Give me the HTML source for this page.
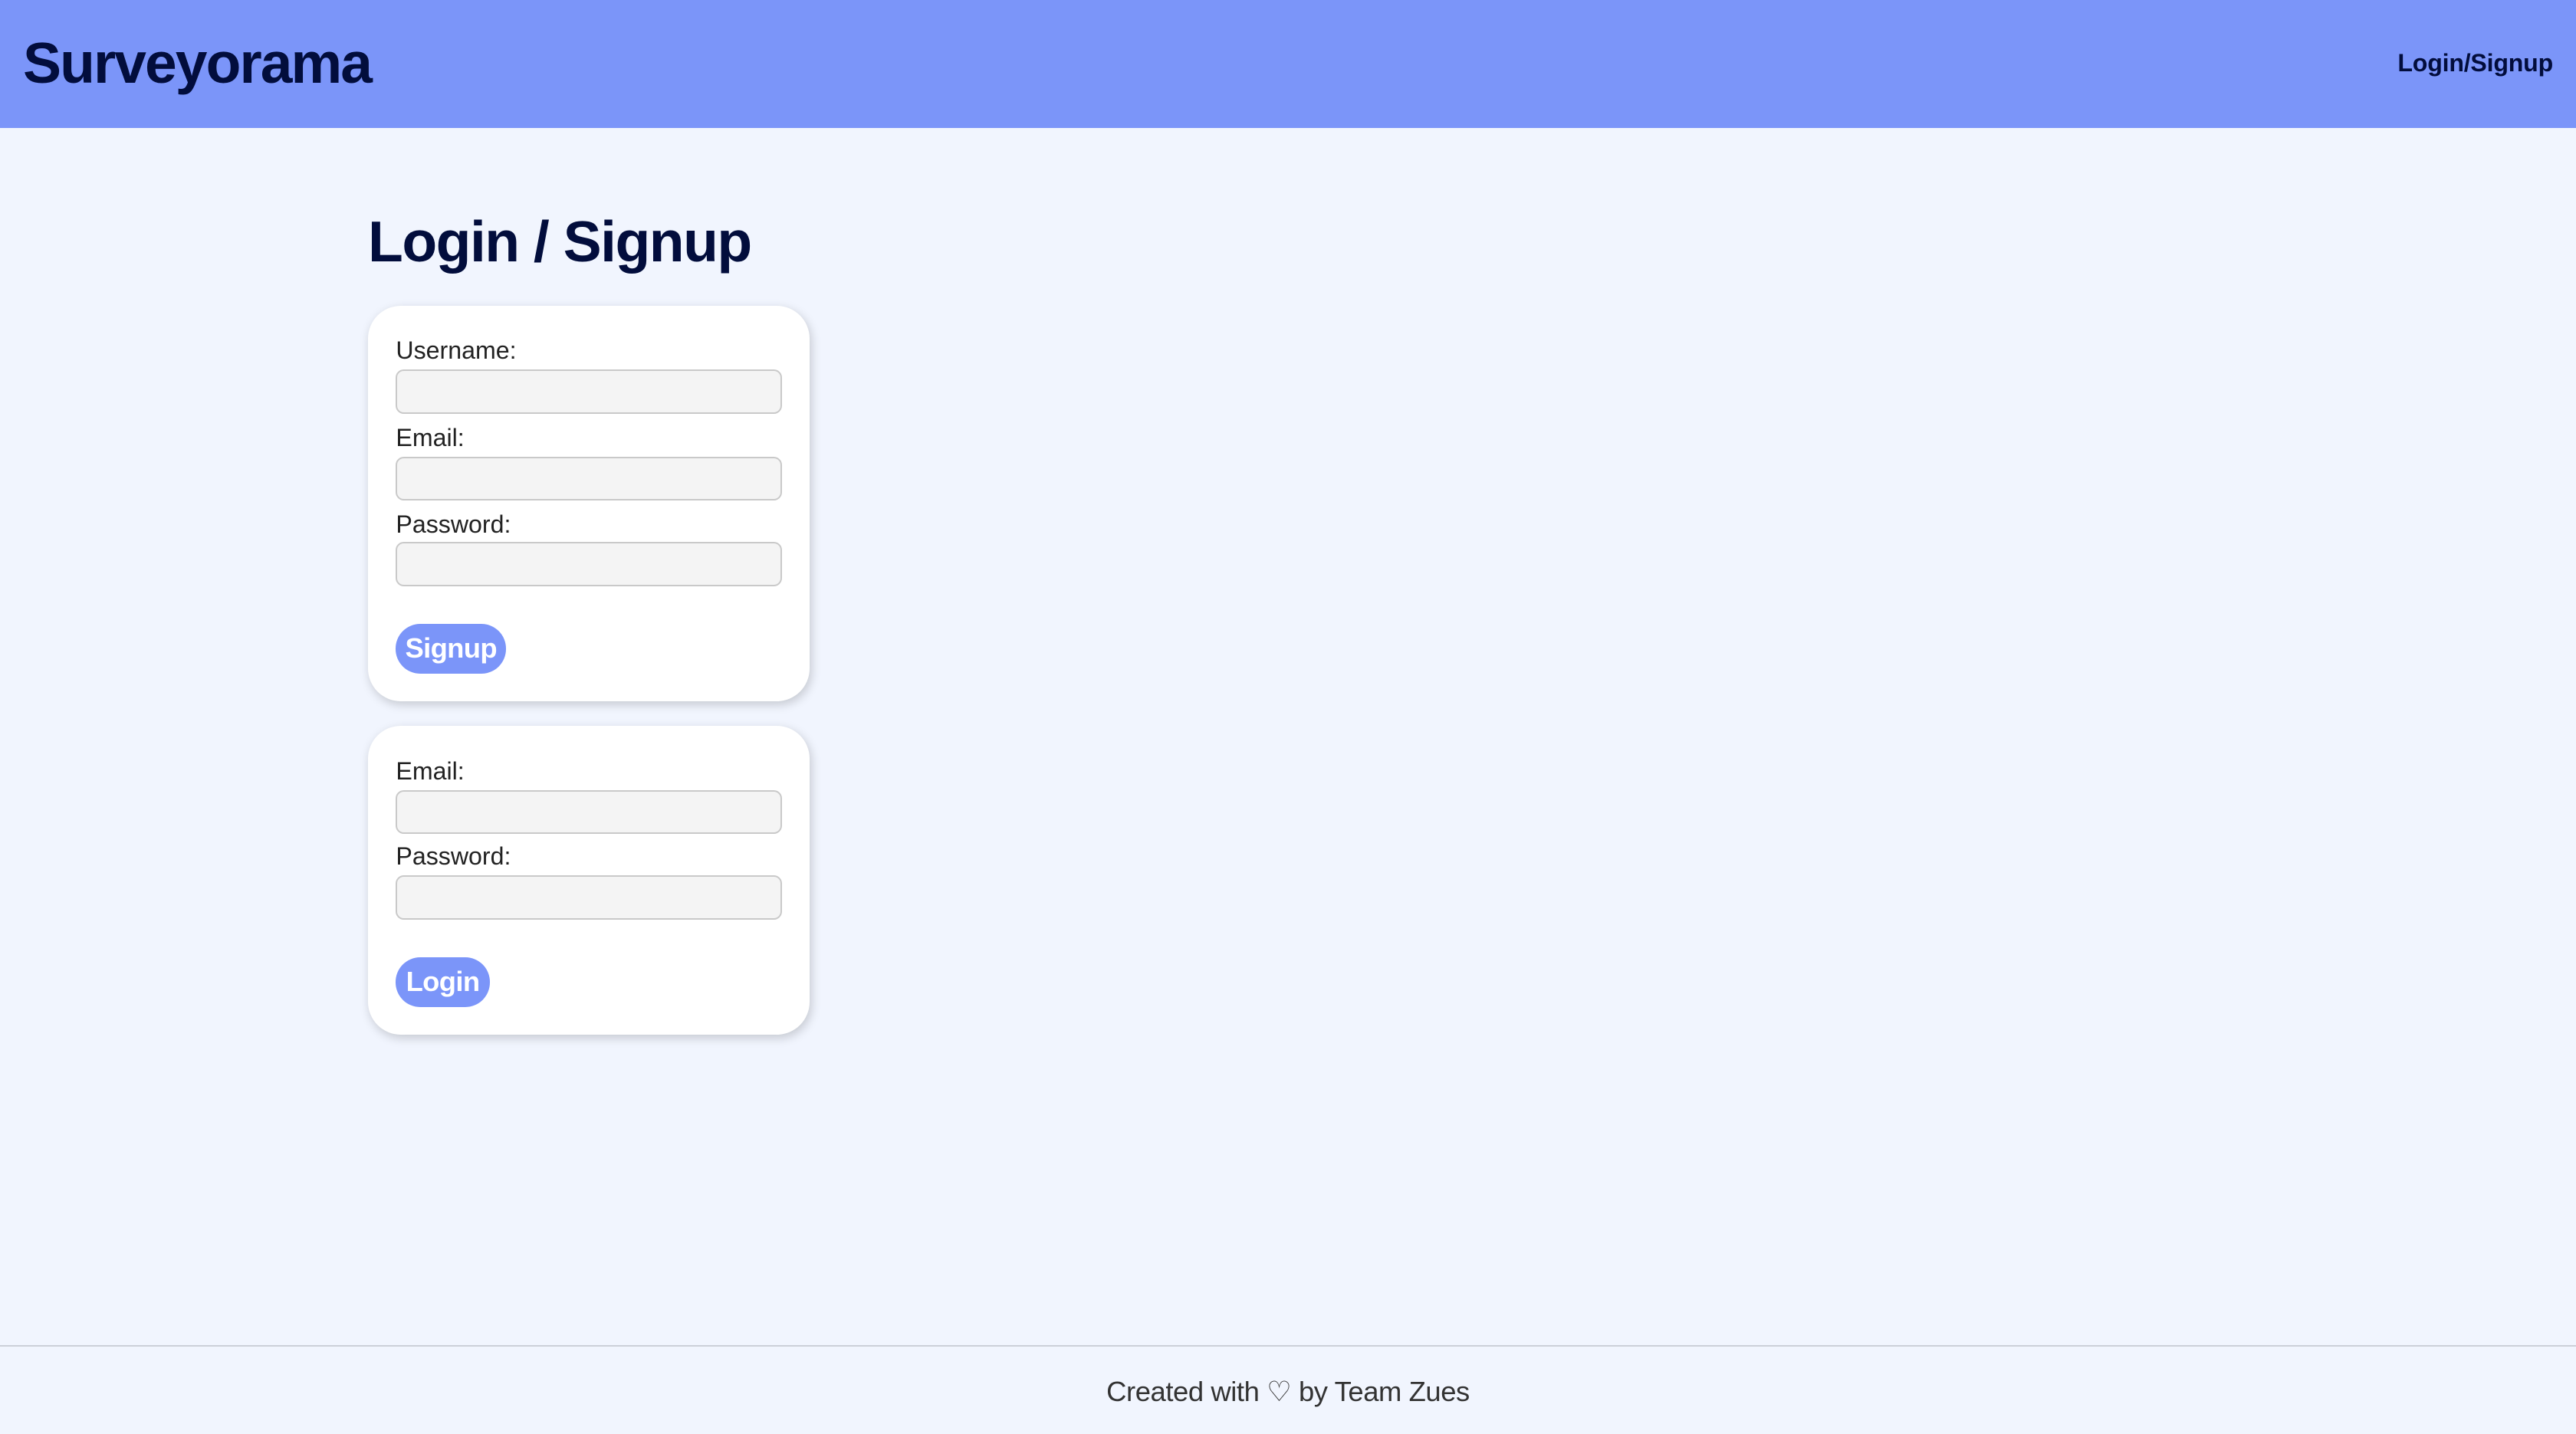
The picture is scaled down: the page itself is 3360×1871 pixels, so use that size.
<!DOCTYPE html>
<html><head><meta charset="utf-8"><style>
html,body{margin:0;padding:0}
body{width:1568px;height:873px;zoom:2.142857;background:#f1f5fe;font-family:"Liberation Sans",Arial,sans-serif;position:relative;overflow:hidden;color:#222}
.hdr{position:absolute;left:0;top:0;width:1568px;height:78px;background:#7b95f9}
.title{position:absolute;left:14px;top:18px;font-size:35px;font-weight:bold;color:#020d3c;letter-spacing:-0.9px}
.nav{position:absolute;right:14px;top:30px;font-size:15px;font-weight:bold;color:#020d3c;letter-spacing:-0.1px}
h1{position:absolute;left:224px;top:127px;margin:0;font-size:35px;font-weight:bold;color:#020d3c;letter-spacing:-0.7px}
.card{position:absolute;left:224px;width:269px;background:#fff;border-radius:20px;box-shadow:1px 2px 6px rgba(0,0,0,.18)}
.lbl{position:absolute;left:17px;font-size:15px;color:#222}
.inp{position:absolute;left:17px;width:233px;height:25px;background:#f4f4f4;border:1px solid #c9c9c9;border-radius:5px}
.btn{position:absolute;left:17px;height:30px;border-radius:15px;background:#7b95f9;color:#fff;font-weight:bold;font-size:17px;line-height:30px;text-align:center;letter-spacing:-0.3px}
.line{position:absolute;left:0;top:819px;width:1568px;height:1px;background:#ccd0d8}
.foot{position:absolute;left:0;width:1568px;top:837px;text-align:center;font-size:17px;color:#333;letter-spacing:-0.2px}
</style></head><body>
<div class="hdr"><div class="title">Surveyorama</div><div class="nav">Login/Signup</div></div>
<h1>Login / Signup</h1>
<div class="card" style="top:186px;height:241px">
<div class="lbl" style="top:19px">Username:</div><div class="inp" style="top:39px"></div>
<div class="lbl" style="top:72px">Email:</div><div class="inp" style="top:92px"></div>
<div class="lbl" style="top:125px">Password:</div><div class="inp" style="top:144px"></div>
<div class="btn" style="top:194px;width:67px">Signup</div>
</div>
<div class="card" style="top:442px;height:188px">
<div class="lbl" style="top:19px">Email:</div><div class="inp" style="top:39px"></div>
<div class="lbl" style="top:71px">Password:</div><div class="inp" style="top:91px"></div>
<div class="btn" style="top:141px;width:57px">Login</div>
</div>
<div class="line"></div>
<div class="foot">Created with ♡ by Team Zues</div>
</body></html>
